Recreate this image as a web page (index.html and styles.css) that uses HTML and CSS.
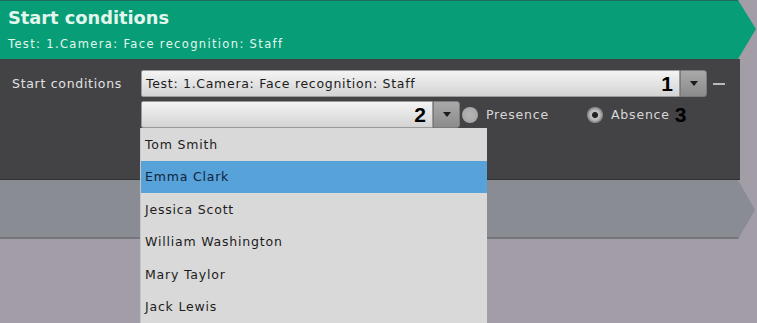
FILE: index.html
```html
<!DOCTYPE html>
<html lang="en">
<head>
  <meta charset="UTF-8">
  <title>Start conditions</title>
  <link rel="stylesheet" href="styles.css">
</head>
<body>
  <div class="screen">
    <div class="header">
      <div class="header-title">Start conditions</div>
      <div class="header-sub">Test: 1.Camera: Face recognition: Staff</div>
    </div>

    <div class="panel">
      <div class="row">
        <div class="row-label">Start conditions</div>
        <div class="combo combo-main">
          <div class="combo-field">
            <span class="combo-text">Test: 1.Camera: Face recognition: Staff</span>
            <span class="marker">1</span>
          </div>
          <div class="combo-btn"><span class="caret"></span></div>
        </div>
        <div class="dash"></div>
      </div>
      <div class="row row-second">
        <div class="combo combo-person">
          <div class="combo-field">
            <span class="combo-text"></span>
            <span class="marker">2</span>
          </div>
          <div class="combo-btn"><span class="caret"></span></div>
        </div>
        <label class="radio">
          <span class="radio-dot"></span>
          <span class="radio-text">Presence</span>
        </label>
        <label class="radio radio-checked">
          <span class="radio-dot"></span>
          <span class="radio-text">Absence</span>
          <span class="marker">3</span>
        </label>
      </div>

      <ul class="dropdown">
        <li>Tom Smith</li>
        <li class="selected">Emma Clark</li>
        <li>Jessica Scott</li>
        <li>William Washington</li>
        <li>Mary Taylor</li>
        <li>Jack Lewis</li>
      </ul>
    </div>

    <div class="next-bar"></div>
  </div>
</body>
</html>
```

FILE: styles.css
```css
* {
  box-sizing: border-box;
}

body {
  margin: 0;
  background-color: #a39da8;
  font-family: "DejaVu Sans", Verdana, sans-serif;
}

.screen {
  width: 757px;
  height: 323px;
  overflow: hidden;
}

/* green arrow header */
.header {
  width: 756px;
  height: 59px;
  padding: 6px 0 0 8px;
  background-color: #079e77;
  border-top: 1px solid #1d6d58;
  clip-path: polygon(0 0, 738px 0, 756px 29px, 738px 100%, 0 100%);
  color: #e3f6ee;
}

.header-title {
  font-size: 17.8px;
  font-weight: bold;
  line-height: 22px;
}

.header-sub {
  margin-top: 8px;
  font-size: 11.5px;
  line-height: 14px;
  letter-spacing: 1.35px;
}

/* dark form panel */
.panel {
  position: relative;
  width: 740px;
  height: 121px;
  padding-top: 11px;
  background-color: #434245;
  border-bottom: 1px solid #333235;
}

.row {
  display: flex;
  align-items: center;
  height: 27px;
}

.row-second {
  margin-top: 4px;
  padding-left: 141px;
}

.row-label {
  width: 141px;
  padding-left: 12px;
  font-size: 12.5px;
  letter-spacing: 0.7px;
  color: #e2e2e2;
}

.combo {
  display: flex;
  height: 27px;
}

.combo-field {
  flex: 1;
  display: flex;
  align-items: center;
  justify-content: space-between;
  padding: 0 6px 0 4px;
  background: linear-gradient(#f4f4f4, #d3d3d3);
  border: 1px solid #9a9a9a;
  border-radius: 2px 0 0 2px;
}

.combo-text {
  font-size: 12.5px;
  letter-spacing: 0.7px;
  color: #1c1c1c;
  white-space: nowrap;
}

.combo-main {
  width: 566px;
}

.combo-person {
  width: 319px;
}

.combo-btn {
  width: 27px;
  display: flex;
  align-items: center;
  justify-content: center;
  background: linear-gradient(#a9a9a9, #8b8b8b);
  border: 1px solid #7b7b7b;
  border-radius: 0 3px 3px 0;
}

.caret {
  width: 0;
  height: 0;
  border-left: 4px solid transparent;
  border-right: 4px solid transparent;
  border-top: 5px solid #1c1c1c;
}

.marker {
  font-family: "Liberation Sans", Arial, sans-serif;
  font-size: 21px;
  font-weight: bold;
  color: #000;
  line-height: 1;
}

.dash {
  width: 12px;
  height: 2px;
  margin-left: 6px;
  background-color: #b9b9b9;
}

.radio {
  display: flex;
  align-items: center;
  gap: 8px;
  font-size: 12.5px;
  letter-spacing: 0.8px;
  color: #d8d8d8;
}

.radio:first-of-type {
  margin-left: 2px;
  width: 125px;
}

.radio-dot {
  width: 16px;
  height: 16px;
  border-radius: 50%;
  background: radial-gradient(#b6b6b6, #a0a0a0);
}

.radio-checked .radio-dot {
  background: radial-gradient(circle, #222 0 2.5px, #bdbdbd 3.5px 5px, #8f8f8f 7px);
}

.radio-checked .marker {
  margin-left: -3px;
}

/* popup list of persons */
.dropdown {
  position: absolute;
  left: 140px;
  top: 69px;
  width: 347px;
  margin: 0;
  padding: 0;
  list-style: none;
  background-color: #d9d9d9;
  border-left: 1px solid #c6c6c6;
  z-index: 2;
}

.dropdown li {
  height: 32.5px;
  padding-left: 4px;
  display: flex;
  align-items: center;
  font-size: 12.5px;
  letter-spacing: 0.8px;
  color: #1c1c1c;
}

.dropdown li.selected {
  background-color: #57a2d9;
  color: #10243a;
}

/* grey arrow below */
.next-bar {
  width: 756px;
  height: 59px;
  background-color: #8a8c93;
  border-bottom: 2px solid #75767c;
  clip-path: polygon(0 0, 738px 0, 755px 30px, 738px 100%, 0 100%);
}
```
